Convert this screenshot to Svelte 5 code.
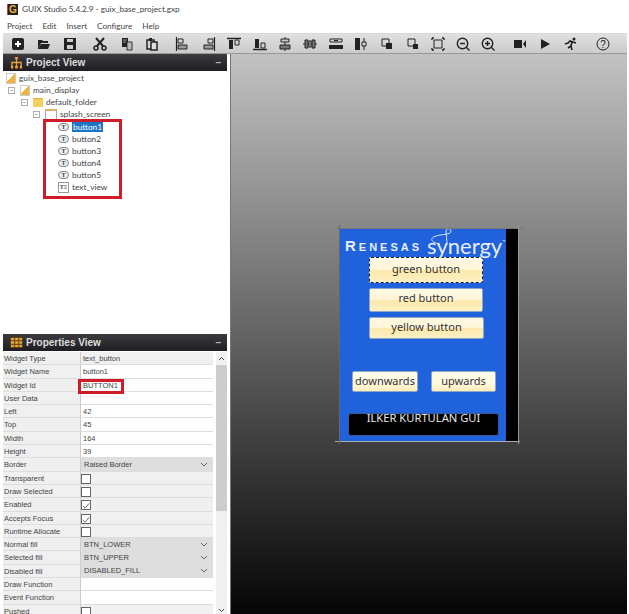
<script>
  // toolbar icon centres, measured along the bar
  const tools = [
    ['new', 18], ['open', 44], ['save', 70], ['cut', 100], ['copy', 127], ['paste', 152],
    ['al', 182], ['ar', 209], ['at', 234], ['ab', 260], ['ac', 285], ['am', 310], ['eh', 336], ['ev', 361],
    ['sw', 387], ['f', 413], ['fit', 438], ['zo', 463], ['zi', 488], ['rec', 520], ['play', 545], ['run', 571], ['help', 603]
  ];
  const gapBefore = (i) => tools[i][1] - (i ? tools[i - 1][1] : 3 + 7) - (i ? 14 : 0);
  const tree = ['button1', 'button2', 'button3', 'button4', 'button5'];
  const props = [
    { k: 'Widget Type', v: 'text_button', type: 'ro' },
    { k: 'Widget Name', v: 'button1', type: 'text' },
    { k: 'Widget Id', v: 'BUTTON1', type: 'text' },
    { k: 'User Data', v: '', type: 'text' },
    { k: 'Left', v: '42', type: 'text' },
    { k: 'Top', v: '45', type: 'text' },
    { k: 'Width', v: '164', type: 'text' },
    { k: 'Height', v: '39', type: 'text' },
    { k: 'Border', v: 'Raised Border', type: 'select' },
    { k: 'Transparent', type: 'check', on: false },
    { k: 'Draw Selected', type: 'check', on: false },
    { k: 'Enabled', type: 'check', on: true },
    { k: 'Accepts Focus', type: 'check', on: true },
    { k: 'Runtime Allocate', type: 'check', on: false },
    { k: 'Normal fill', v: 'BTN_LOWER', type: 'select' },
    { k: 'Selected fill', v: 'BTN_UPPER', type: 'select' },
    { k: 'Disabled fill', v: 'DISABLED_FILL', type: 'select' },
    { k: 'Draw Function', v: '', type: 'text' },
    { k: 'Event Function', v: '', type: 'text' },
    { k: 'Pushed', type: 'check', on: false }
  ];
</script>

<div class="app">
  <div class="title">
    <span class="logo">G</span>
    <span>GUIX Studio 5.4.2.9 - guix_base_project.gxp</span>
  </div>
  <div class="menu">
    <span>Project</span><span>Edit</span><span>Insert</span><span>Configure</span><span>Help</span>
  </div>
  <div class="toolbar">
    {#each tools as t, i}
      <svg width="14" height="14" viewBox="0 0 14 14" style="margin-left:{gapBefore(i)}px" fill="#222" stroke="#222" stroke-width="1">
        {#if t[0] === 'new'}
          <rect x="1" y="1" width="12" height="12" rx="2" stroke="none" /><path d="M7 4v6M4 7h6" stroke="#fff" stroke-width="2" />
        {:else if t[0] === 'open'}
          <path d="M1 3h4l1 1h5v2H4l-3 6zM4 7h9l-2 5H1z" stroke="none" />
        {:else if t[0] === 'save'}
          <path d="M1 1h12v12H1z" stroke="none" /><path d="M4 2h6v3H4zM4 8h6v4H4z" fill="#ccc" stroke="none" />
        {:else if t[0] === 'cut'}
          <circle cx="3" cy="11" r="2" fill="none" stroke-width="1.5" /><circle cx="11" cy="11" r="2" fill="none" stroke-width="1.5" /><path d="M4 9 11 1M10 9 3 1" stroke-width="2" />
        {:else if t[0] === 'copy'}
          <path d="M2 1h6v9H2z" stroke="none" /><path d="M7 5h5v8H7z" fill="#ddd" /><path d="M3 3h4M3 5h3M8 7h3M8 9h3M8 11h3" stroke="#999" />
        {:else if t[0] === 'paste'}
          <path d="M2 3h7v9H2z" fill="none" stroke-width="1.5" /><path d="M6 5h6v8H6z" fill="#ddd" stroke-width="1.5" /><path d="M4 1h3v3H4z" stroke="none" />
        {:else if t[0] === 'al'}
          <path d="M1.500 0v14" stroke-width="1.2" /><path d="M3 2h5v4H3z" fill="none" /><path d="M3 8h9v4H3z" fill="#999" />
        {:else if t[0] === 'ar'}
          <path d="M12.500 0v14" stroke-width="1.2" /><path d="M6 2h5v4H6z" fill="none" /><path d="M2 8h9v4H2z" fill="#999" />
        {:else if t[0] === 'at'}
          <path d="M0 1.500h14" stroke-width="1.5" /><path d="M2 3h4v9H2z" stroke="none" /><path d="M8 3h4v5H8z" fill="none" />
        {:else if t[0] === 'ab'}
          <path d="M0 12.500h14" stroke-width="1.5" /><path d="M2 2h4v9H2z" stroke="none" /><path d="M8 6h4v5H8z" fill="none" />
        {:else if t[0] === 'ac'}
          <path d="M7 0v14" /><path d="M3 2h8v3H3z" fill="#ccc" /><path d="M2 8h10v4H2z" fill="#777" />
        {:else if t[0] === 'am'}
          <path d="M0 7h14" /><path d="M2 3h3v8H2z" fill="#777" /><path d="M6 4h2v6H6z" fill="#ccc" /><path d="M9 3h3v8H9z" fill="#777" />
        {:else if t[0] === 'eh'}
          <path d="M1 2h12v3H1z" fill="none" /><path d="M5 3.500h4" /><path d="M0 8h14v4H0z" stroke="none" />
        {:else if t[0] === 'ev'}
          <path d="M1 1h5v12H1z" stroke="none" /><path d="M8 5h4v4H8zM10 1v4M10 9v4" fill="none" />
        {:else if t[0] === 'sw'}
          <path d="M2 2h7v7H2z" fill="none" /><path d="M6 6h6v6H6z" stroke="none" />
        {:else if t[0] === 'f'}
          <path d="M2 2h7v7H2z" fill="none" /><path d="M7 7h5v5H7z" stroke="none" />
        {:else if t[0] === 'fit'}
          <path d="M3 3h8v8H3z" fill="none" /><path d="M1 1v2M1 1h2M13 1v2M13 1h-2M1 13v-2M1 13h2M13 13v-2M13 13h-2" stroke-width="1.3" />
        {:else if t[0] === 'zo'}
          <circle cx="6.500" cy="6.500" r="5.200" fill="none" stroke-width="1.4" /><path d="M4 6.500h5M10.500 10.500l3 3" stroke-width="1.4" />
        {:else if t[0] === 'zi'}
          <circle cx="6.500" cy="6.500" r="5.200" fill="none" stroke-width="1.4" /><path d="M4 6.500h5M6.500 4v5M10.500 10.500l3 3" stroke-width="1.4" />
        {:else if t[0] === 'rec'}
          <path d="M1 3h8v8H1zM13 3v8l-3-4z" stroke="none" />
        {:else if t[0] === 'play'}
          <path d="M3 2v10l9-5z" stroke="none" />
        {:else if t[0] === 'run'}
          <circle cx="10" cy="2" r="1.500" stroke="none" /><path d="M1 7l3-1 2-2 3 1 3 1M8 5 7 9l1 4M7 9l-3 2" fill="none" stroke-width="1.6" />
        {:else}
          <circle cx="7" cy="7" r="6" fill="none" /><text x="7" y="10.500" font-size="10" text-anchor="middle" stroke="none" font-family="Liberation Sans">?</text>
        {/if}
      </svg>
    {/each}
  </div>

  <div class="main">
    <div class="side">
      <section class="project">
        <div class="head">
          <svg width="13" height="13" viewBox="0 0 14 14" fill="none" stroke="#e7a33a" stroke-width="1.4"><path d="M7 1v5M2 12V7h10v5M7 6v6" /><path d="M5.500 1h3v2.500h-3zM1 10.500h2.500v3H1zM5.500 10.500h3v3h-3zM10.500 10.500h2.500v3h-2.500z" fill="#e7a33a" stroke="none" /></svg>
          <span>Project View</span><i>–</i>
        </div>
        <div class="tree">
          <div class="node"><span class="ico doc"></span>guix_base_project</div>
          <div class="node l1"><span class="box">−</span><span class="ico doc"></span>main_display</div>
          <div class="node l2"><span class="box">−</span><span class="ico folder"></span>default_folder</div>
          <div class="node l3"><span class="box">−</span><span class="ico win"></span>splash_screen</div>
          <div class="leafs">
            {#each tree as b, i}
              <div class="node leaf"><span class="ico pill">T</span><span class:sel={i === 0}>{b}</span></div>
            {/each}
            <div class="node leaf"><span class="ico tv">T≡</span><span>text_view</span></div>
            <div class="frame"></div>
          </div>
        </div>
      </section>

      <section class="props">
        <div class="head">
          <svg width="13" height="11" viewBox="0 0 14 12" fill="#e0a63c" stroke="#5a3d10" stroke-width="1"><path d="M.5.500h13v11H.5zM5 .5v11M9.500.5v11M.5 4h13M.5 8h13" /></svg>
          <span>Properties View</span><i>–</i>
        </div>
        <div class="body">
          <div class="list">
            {#each props as p}
              <div class="row">
                <div class="key">{p.k}</div>
                {#if p.type === 'check'}
                  <div class="val ro"><span class="check">{#if p.on}<svg width="8" height="8" viewBox="0 0 9 8" fill="none" stroke="#555"><path d="M1 4l2.500 2.500L8 1" /></svg>{/if}</span></div>
                {:else if p.type === 'select'}
                  <div class="val sel-box"><span>{p.v}</span><svg width="8" height="5" viewBox="0 0 8 5" fill="none" stroke="#666"><path d="M1 1l3 3 3-3" /></svg></div>
                {:else}
                  <div class="val" class:ro={p.type === 'ro'}>{p.v}</div>
                {/if}
              </div>
            {/each}
          </div>
          <div class="scroll">
            <svg width="7" height="5" viewBox="0 0 7 5" fill="none" stroke="#444"><path d="M1 4l2.500-2.500L6 4" /></svg>
            <div class="thumb"></div>
            <svg class="dn" width="7" height="5" viewBox="0 0 7 5" fill="none" stroke="#444"><path d="M1 1l2.500 2.500L6 1" /></svg>
          </div>
        </div>
        <div class="mark"></div>
      </section>
    </div>

    <div class="canvas">
      <div class="device">
        <div class="screen">
          <div class="brand">
            <span class="ren">Renesas</span><span class="syn">synergy</span><sup>™</sup>
            <svg class="swoosh" width="30" height="20" viewBox="0 0 30 20" fill="none" stroke="#e8eefb" stroke-width="0.9"><path d="M12 17C3 16 1 11 8 9c6-2 15-1 15-5 0-3-5-3-5 0 0 4 1 8 1 13" /></svg>
          </div>
          <div class="btn focus">green button</div>
          <div class="btn">red button</div>
          <div class="btn wide">yellow button</div>
          <div class="pair">
            <div class="btn small">downwards</div>
            <div class="btn small up">upwards</div>
          </div>
          <div class="textview">ILKER KURTULAN GUI</div>
        </div>
        <div class="edge"></div>
        <span class="tick t1"></span><span class="tick t2"></span><span class="tick t3"></span><span class="tick t4"></span>
      </div>
    </div>
  </div>
</div>

<style>
  :global(body) {
    margin: 0;
    background: #fff;
  }
  .app {
    width: 629px;
    height: 614px;
    overflow: hidden;
    font-family: Lato, "Liberation Sans", sans-serif;
    color: #333;
    display: flex;
    flex-direction: column;
  }
  .title {
    height: 18px;
    display: flex;
    align-items: center;
    gap: 4px;
    padding-left: 7px;
    font-size: 8.2px;
    color: #444;
  }
  .logo {
    width: 11px;
    height: 11px;
    background: #222;
    color: #e8b53a;
    font: bold 10px/11px "Liberation Sans", sans-serif;
    text-align: center;
    border-left: 1px solid #e0402a;
    box-sizing: border-box;
  }
  .menu {
    height: 15px;
    display: flex;
    align-items: center;
    gap: 10px;
    padding-left: 7px;
    font-size: 8.2px;
    color: #444;
  }
  .toolbar {
    height: 21px;
    display: flex;
    align-items: center;
    background: linear-gradient(#e0e0e0, #cbcbcb);
    border-top: 1px solid #d8d8d8;
    border-bottom: 1px solid #9a9a9a;
    box-sizing: border-box;
    margin: 0 2px 0 3px;
  }
  .main {
    flex: 1;
    display: flex;
    min-height: 0;
  }
  .side {
    width: 231px;
    flex: none;
    padding-left: 3px;
    box-sizing: border-box;
    display: flex;
    flex-direction: column;
    border-right: 1px solid #777;
  }
  .head {
    height: 17px;
    width: 224px;
    display: flex;
    align-items: center;
    gap: 3px;
    padding-left: 7px;
    box-sizing: border-box;
    background: linear-gradient(#3c3c40, #1e1e22);
    color: #ddd;
    font: bold 10px "Liberation Sans", sans-serif;
  }
  .head i {
    margin-left: auto;
    margin-right: 6px;
    font-style: normal;
    color: #bbb;
  }
  .project {
    height: 280px;
  }
  .tree {
    padding-top: 1px;
    font-size: 8.3px;
    color: #444;
  }
  .node {
    height: 12px;
    display: flex;
    align-items: center;
    gap: 2px;
    white-space: nowrap;
    padding-left: 3px;
  }
  .l1 { padding-left: 5px; }
  .l2 { padding-left: 18px; }
  .l3 { padding-left: 30px; }
  .leafs {
    position: relative;
    margin: 1px 0 0 52px;
  }
  .leaf {
    padding-left: 3px;
    gap: 2px;
  }
  .frame {
    position: absolute;
    left: -12px;
    top: -2px;
    width: 73px;
    height: 74px;
    border: 3px solid #d01c28;
  }
  .sel {
    background: #1c74c4;
    color: #fff;
    padding: 0 1px;
  }
  .box {
    width: 5px;
    height: 5px;
    border: 1px solid #aaa;
    font: 6px/5px "Liberation Sans", sans-serif;
    text-align: center;
    margin-right: 3px;
  }
  .ico {
    display: inline-block;
    flex: none;
    margin-right: 1px;
  }
  .doc {
    width: 8px;
    height: 9px;
    border: 1px solid #ccc;
    background: linear-gradient(135deg, #fff 45%, #f0b43c 45%);
  }
  .folder {
    width: 10px;
    height: 8px;
    background: #f5cf5e;
    border-top: 1px solid #e3ae3a;
    margin-right: 1px;
  }
  .win {
    width: 10px;
    height: 8px;
    border: 1px solid #aaa;
    border-top: 2px solid #e2b062;
    margin-right: 1px;
  }
  .pill {
    width: 9px;
    height: 6px;
    border: 1px solid #888;
    border-radius: 4px;
    background: #eee;
    font: bold 6px/6px "Liberation Serif", serif;
    text-align: center;
  }
  .tv {
    width: 9px;
    height: 9px;
    border: 1px solid #999;
    font: bold 6px/9px "Liberation Serif", serif;
    text-align: center;
    margin-right: 1px;
  }
  .props {
    flex: 1;
    position: relative;
    min-height: 0;
  }
  .body {
    display: flex;
    width: 224px;
    padding-top: 1px;
  }
  .list {
    width: 210px;
    flex: none;
  }
  .row {
    height: 13.3px;
    display: flex;
    font-size: 7.5px;
    color: #444;
    font-family: "Liberation Sans", sans-serif;
  }
  .key {
    width: 77px;
    padding-left: 1px;
    background: #f0f0f0;
    border-bottom: 1px solid #ddd;
    box-sizing: border-box;
    line-height: 13px;
    white-space: nowrap;
    flex: none;
  }
  .val {
    flex: 1;
    background: #fff;
    padding-left: 2px;
    line-height: 13px;
    box-sizing: border-box;
    border-bottom: 1px solid #ddd;
    border-left: 1px solid #ccc;
  }
  .ro {
    background: #f0f0f0;
  }
  .sel-box {
    background: #dedede;
    display: flex;
    justify-content: space-between;
    align-items: center;
    padding: 0 5px 0 3px;
  }
  .check {
    display: block;
    width: 8px;
    height: 8px;
    margin-top: 2px;
    margin-left: -2px;
    border: 1px solid #666;
    background: #fff;
  }
  .scroll {
    width: 11px;
    margin-left: 3px;
    background: #f0f0f0;
    display: flex;
    flex-direction: column;
    align-items: center;
    padding-top: 4px;
    box-sizing: border-box;
    height: 263px;
  }
  .thumb {
    width: 11px;
    height: 146px;
    margin-top: 4px;
    background: #cdcdcd;
  }
  .dn {
    margin-top: auto;
    margin-bottom: 2px;
  }
  .mark {
    position: absolute;
    left: 75px;
    top: 45px;
    width: 40px;
    height: 9px;
    border: 3px solid #d01c28;
  }
  .canvas {
    flex: 1;
    margin-right: 2px;
    background: linear-gradient(#c2c2c2, #050505);
    padding: 174px 0 0 109px;
    box-sizing: border-box;
  }
  .device {
    position: relative;
    width: 178px;
    height: 213px;
    display: flex;
  }
  .screen {
    width: 166px;
    background: #2062dc;
    box-sizing: border-box;
    font-family: "Noto Sans", sans-serif;
  }
  .edge {
    width: 12px;
    background: #000;
  }
  .brand {
    position: relative;
    height: 29px;
    display: flex;
    align-items: flex-end;
    color: #e8eefb;
    padding-left: 5px;
    white-space: nowrap;
  }
  .ren {
    font: bold 15px/12px "Liberation Sans", sans-serif;
    font-variant: small-caps;
    letter-spacing: 3px;
    margin: 0 5px 5px 0;
  }
  .syn {
    font: 400 22px/24px Lato, sans-serif;
    margin-bottom: -1px;
  }
  .swoosh {
    position: absolute;
    left: 88px;
    top: -1px;
  }
  sup {
    font-size: 4px;
    align-self: flex-start;
    margin-top: 11px;
  }
  .btn {
    width: 114px;
    height: 24px;
    margin: 0 0 5px 29px;
    border-radius: 2px;
    border: 1px solid #8ea6c8;
    box-sizing: border-box;
    background: linear-gradient(#fff9e4 0, #fff6d8 50%, #fde9ac 52%, #fdf0c4 100%);
    color: #333;
    font-size: 11px;
    line-height: 18px;
    text-align: center;
  }
  .focus {
    border: 1px dashed #10204a;
    height: 26px;
    line-height: 21px;
  }
  .wide {
    width: 115px;
    height: 22px;
    line-height: 17px;
  }
  .pair {
    display: flex;
    justify-content: space-between;
    padding: 27px 10px 0 12px;
  }
  .small {
    width: 66px;
    height: 21px;
    line-height: 18px;
    margin: 0;
    background: linear-gradient(#fffbea 0, #fff9e0 60%, #fdeeb8 100%);
  }
  .up {
    width: 65px;
  }
  .textview {
    width: 151px;
    height: 23px;
    margin: 21px 0 0 8px;
    background: #000;
    color: #e8e8e8;
    border: 1px solid #3a5aa0;
    border-radius: 3px;
    box-sizing: border-box;
    font-size: 11.2px;
    line-height: 8px;
    text-align: center;
  }
  .tick {
    position: absolute;
    background: #999;
  }
  .t1 { left: -5px; right: -5px; top: 0; height: 1px; background: #777; }
  .t2 { left: -5px; right: -2px; bottom: -1px; height: 1px; background: #aaa; }
  .t3 { left: 178px; top: -3px; bottom: -3px; width: 1px; }
  .t4 { left: -1px; top: -3px; bottom: -3px; width: 1px; background: #666; }
</style>
